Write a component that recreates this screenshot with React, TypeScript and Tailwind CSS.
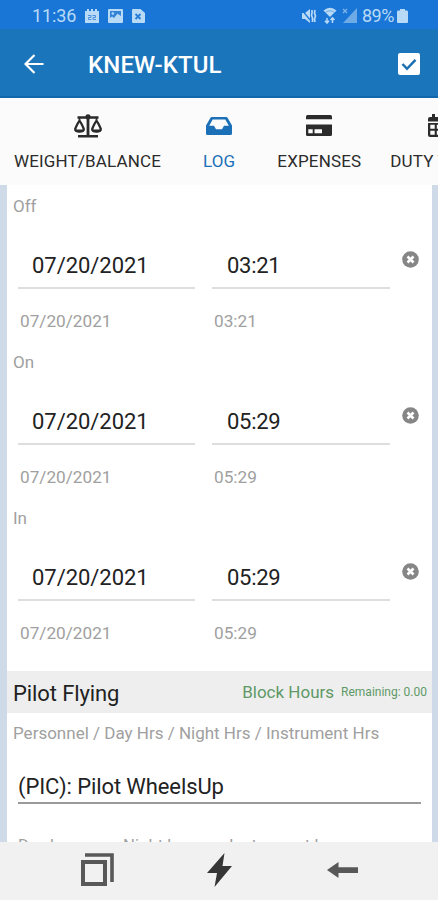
import { useState, type ReactNode } from 'react';

interface TimeEntry {
  label: string;
  date: string;
  time: string;
}

const entries: TimeEntry[] = [
  { label: 'Off', date: '07/20/2021', time: '03:21' },
  { label: 'On', date: '07/20/2021', time: '05:29' },
  { label: 'In', date: '07/20/2021', time: '05:29' },
];

function ScaleIcon() {
  return (
    <svg width="30" height="26" viewBox="0 0 30 26" fill="none" stroke="currentColor">
      <path d="M4.5 4.5H25.5M5 23.3H25" strokeWidth="2.6" />
      <path d="M15 3V22.5" strokeWidth="2.8" />
      <circle cx="15" cy="3.8" r="2.6" fill="currentColor" stroke="none" />
      <path
        d="M6.5 8C5.5 9 3.2 13.5 2.2 16Q2 18.6 6.5 18.6Q11 18.6 10.8 16C9.8 13.5 7.5 9 6.5 8ZM23.5 8C22.5 9 20.2 13.5 19.2 16Q19 18.6 23.5 18.6Q28 18.6 27.8 16C26.8 13.5 24.5 9 23.5 8Z"
        strokeWidth="2.3"
        strokeLinejoin="round"
      />
      <path d="M6.5 5V8M23.5 5V8" strokeWidth="1.8" />
      <path d="M2 16.5H11Q10 19.3 6.5 19.3Q3 19.3 2 16.5ZM19 16.5H28Q27 19.3 23.5 19.3Q20 19.3 19 16.5Z" fill="currentColor" stroke="none" />
    </svg>
  );
}

function InboxIcon() {
  return (
    <svg width="28" height="20" viewBox="0 0 28 20" fill="currentColor">
      <path fillRule="evenodd" d="M6.7 1H21.3Q22.2 1 22.7 1.9L27 9.5V17.5Q27 19 25.5 19H2.5Q1 19 1 17.5V9.5L5.3 1.9Q5.8 1 6.7 1ZM7.7 3.4L4.2 9.8H9L11 13.3H17L19 9.8H23.8L20.3 3.4Z" />
    </svg>
  );
}

function CardIcon() {
  return (
    <svg width="28" height="24" viewBox="0 0 28 24" fill="currentColor">
      <path d="M2.5 1H25.5Q27 1 27 2.5V5.2H1V2.5Q1 1 2.5 1Z" />
      <path fillRule="evenodd" d="M1 10.5H27V20.5Q27 22 25.5 22H2.5Q1 22 1 20.5ZM3.3 15.2V19.2H7.7V15.2ZM9.5 15.2V19.2H17V15.2Z" />
    </svg>
  );
}

function CalendarIcon() {
  return (
    <svg width="24" height="26" viewBox="0 0 24 26" fill="currentColor">
      <path fillRule="evenodd" d="M5 1H8V4H16V1H19V4H21Q23 4 23 6V8.5H1V6Q1 4 3 4H5ZM1 10H23V22Q23 24 21 24H3Q1 24 1 22ZM3.3 11.7V15.7H7.7V11.7ZM9.8 11.7V15.7H14.2V11.7ZM16.3 11.7V15.7H20.7V11.7ZM3.3 17.7V21.7H7.7V17.7ZM9.8 17.7V21.7H14.2V17.7ZM16.3 17.7V21.7H20.7V17.7Z" />
    </svg>
  );
}

function StatusBar() {
  return (
    <div className="flex h-[29px] shrink-0 items-center justify-between bg-[#1976d6] pt-[2px] pr-[30px] pl-8 text-[18px] text-[#b9daf7]">
      <div className="flex items-center">
        <span className="w-[44px] tracking-[-0.1px]">11:36</span>
        <svg className="ml-[9px]" width="14" height="14" viewBox="0 0 14 14" fill="currentColor">
          <path d="M0 2H2V0H4V2H6V0H8V2H10V0H12V2H14V14H0Z" />
          <path d="M3 6.5H6V8.5H3.5V10.5H6.3M7.5 6.5H10.5V8.5H8V10.5H11" fill="none" stroke="#4b91dc" />
        </svg>
        <svg className="ml-[9px]" width="15" height="14" viewBox="0 0 15 14">
          <rect width="15" height="14" rx="1" fill="currentColor" />
          <path d="M2 2H13V7L9.5 4.8L6 9L4 7.5L2 9Z" fill="#3585d7" />
          <circle cx="4.8" cy="4.5" r="1.2" fill="currentColor" />
        </svg>
        <svg className="ml-[9px]" width="13" height="14" viewBox="0 0 13 14">
          <path d="M1 0H8.5L13 4V13Q13 14 12 14H1Q0 14 0 13V1Q0 0 1 0Z" fill="currentColor" />
          <path d="M3.5 5L8.5 10M8.5 5L3.5 10" stroke="#287dd6" strokeWidth="1.8" />
        </svg>
      </div>
      <div className="flex items-center">
        <svg width="16" height="16" viewBox="0 0 16 16">
          <path d="M1 5H4L9 1V15L4 11H1Z" fill="currentColor" />
          <path d="M0 1L10 13" stroke="#1976d6" strokeWidth="1.2" />
          <path d="M11 2V5L10.5 7.5L11.5 10V14M14 2L13.5 5L14.5 8L13.5 11L14 14" fill="none" stroke="currentColor" strokeWidth="1.7" />
        </svg>
        <svg className="ml-[6px]" width="14" height="17" viewBox="0 0 14 17">
          <path d="M0.5 3.5Q7 -2 13.5 3.5L7 10Z" fill="currentColor" />
          <path d="M2.5 5.5Q7 2 11.5 5.5" fill="none" stroke="#5c9fe2" strokeWidth="0.9" />
          <path d="M4 11V16M2 13.7L4 16L6 13.7M9.5 16V11M7.5 13L9.5 10.8L11.5 13" fill="none" stroke="currentColor" strokeWidth="1.5" />
        </svg>
        <svg className="ml-[5px]" width="15" height="15" viewBox="0 0 15 15">
          <path d="M15 0V15H1Z" fill="#6eaae6" />
          <path d="M1 1L5 5M5 1L1 5" stroke="#7fb5ea" strokeWidth="1.2" />
        </svg>
        <span className="ml-[5px] w-[34px] tracking-[-0.5px]">89%</span>
        <svg className="ml-[1px]" width="11" height="14" viewBox="0 0 11 14" fill="currentColor">
          <path d="M3 0H8V1.5H10Q11 1.5 11 3V13Q11 14 10 14H1Q0 14 0 13V3Q0 1.5 1 1.5H3Z" />
        </svg>
      </div>
    </div>
  );
}

function Header() {
  return (
    <header className="flex h-[69px] shrink-0 items-center border-b-2 border-[#1067ab] bg-[#1b75bb] pt-[2px] pr-[18px] pl-6 text-white">
      <svg width="20" height="20" viewBox="0 0 20 20" fill="none" stroke="currentColor" strokeWidth="2.2">
        <path d="M19.5 10H1.5M10.5 1L1.5 10L10.5 19" />
      </svg>
      <h1 className="ml-11 flex-1 pt-[2px] text-[24px] font-medium tracking-[0.1px]">KNEW-KTUL</h1>
      <svg width="22" height="22" viewBox="0 0 22 22">
        <rect width="22" height="22" rx="2" fill="white" />
        <path d="M4.5 11L9 15.8L17.5 6.8" fill="none" stroke="#1b6fb3" strokeWidth="2.5" />
      </svg>
    </header>
  );
}

interface TabProps {
  icon: ReactNode;
  label: string;
  active: boolean;
  onClick: () => void;
}

function Tab({ icon, label, active, onClick }: TabProps) {
  return (
    <button
      onClick={onClick}
      className={`flex shrink-0 cursor-pointer flex-col items-center whitespace-nowrap ${active ? 'text-[#1b70b8]' : 'text-[#2b2b2b]'}`}
    >
      <span className="flex h-[28px] items-center">{icon}</span>
      <span className="mt-[11px] text-[17px] leading-[20px] tracking-[0.15px]">{label}</span>
    </button>
  );
}

function TimeBlock({ label, date, time }: TimeEntry) {
  return (
    <section className="h-[156px]">
      <p className="h-[42px] pt-[11px] pl-[6px] text-[17px] leading-[21px] text-[#a0a0a0]">{label}</p>
      <div className="flex pl-[11px]">
        <div className="w-[177px]">
          <div className="flex h-[62px] items-center border-b-2 border-[#dedede] pt-[16px] pl-[14px] text-[22px] tracking-[-0.05px] text-[#222222]">{date}</div>
          <p className="pt-[22px] pl-[2px] text-[17.2px] leading-[21px] text-[#a0a0a0]">{date}</p>
        </div>
        <div className="ml-[17px] w-[178px]">
          <div className="flex h-[62px] items-center border-b-2 border-[#dedede] pt-[16px] pl-[15px] text-[22px] tracking-[-0.3px] text-[#222222]">{time}</div>
          <p className="pt-[22px] pl-[2px] text-[17.2px] leading-[21px] text-[#a0a0a0]">{time}</p>
        </div>
        <button className="mt-[24px] ml-[12px] h-[17px] cursor-pointer" aria-label="Clear">
          <svg width="17" height="17" viewBox="0 0 17 17">
            <circle cx="8.5" cy="8.5" r="8.3" fill="#868686" />
            <path d="M5.5 5.5L11.5 11.5M11.5 5.5L5.5 11.5" stroke="white" strokeWidth="2.6" />
          </svg>
        </button>
      </div>
    </section>
  );
}

export default function App() {
  const [tab, setTab] = useState('LOG');

  return (
    <div className="flex h-[900px] w-[438px] flex-col overflow-hidden bg-white font-['Roboto',sans-serif]">
      <StatusBar />
      <Header />

      <nav className="flex h-[87px] shrink-0 overflow-hidden bg-[#fbfbfb] pt-[14px] pl-[14px]">
        <div className="w-[147px]">
          <Tab icon={<ScaleIcon />} label="WEIGHT/BALANCE" active={tab === 'WEIGHT'} onClick={() => setTab('WEIGHT')} />
        </div>
        <div className="ml-[42px] w-[34px]">
          <Tab icon={<InboxIcon />} label="LOG" active={tab === 'LOG'} onClick={() => setTab('LOG')} />
        </div>
        <div className="ml-[42px] w-[84px]">
          <Tab icon={<CardIcon />} label="EXPENSES" active={tab === 'EXPENSES'} onClick={() => setTab('EXPENSES')} />
        </div>
        <div className="ml-[29px] shrink-0">
          <Tab icon={<CalendarIcon />} label="DUTY TIMES" active={tab === 'DUTY'} onClick={() => setTab('DUTY')} />
        </div>
      </nav>

      <main className="min-h-0 flex-1 overflow-hidden border-x-[7px] border-r-[6px] border-[#cfdae8] bg-white">
        {entries.map((entry) => (
          <TimeBlock key={entry.label} {...entry} />
        ))}

        <div className="mt-[18px] flex h-[42px] items-center bg-[#eeeeee] pr-[5px] pl-[6px]">
          <h2 className="flex-1 pt-[2px] text-[22px] tracking-[-0.1px] text-[#222222]">Pilot Flying</h2>
          <span className="pt-[1px] text-[17px] text-[#5f9967]">Block Hours</span>
          <span className="ml-[7px] text-[12px] text-[#5f9967]">Remaining: 0.00</span>
        </div>

        <p className="pt-[10px] pl-[6px] text-[17px] leading-[21px] text-[#a0a0a0]">Personnel / Day Hrs / Night Hrs / Instrument Hrs</p>
        <div className="mt-[28px] ml-[11px] flex h-[32px] w-[403px] items-center border-b-2 border-[#9a9a9a] pb-[2px] text-[22px] tracking-[-0.1px] text-[#222222]">
          (PIC): Pilot WheelsUp
        </div>
        <div className="mt-[31px] flex pl-[11px] text-[16.8px] leading-[21px] text-[#a0a0a0]">
          <span className="w-[105px]">Day hrs</span>
          <span className="w-[106px]">Night hrs</span>
          <span className="w-[89px] overflow-hidden whitespace-nowrap">Instrument hrs</span>
        </div>
      </main>

      <footer className="flex h-[58px] shrink-0 items-start bg-[#f1f1f1] pl-[80px] text-[#585858]">
        <button className="mt-[11px] cursor-pointer" aria-label="Recent">
          <svg width="34" height="34" viewBox="0 0 34 34" fill="none" stroke="currentColor" strokeWidth="4">
            <path d="M3 9H25V31H3Z" />
            <path d="M5 2H32V29" strokeWidth="3.6" />
          </svg>
        </button>
        <button className="mt-[11px] ml-[92px] cursor-pointer" aria-label="Home">
          <svg width="27" height="35" viewBox="0 0 27 35" fill="#353535">
            <path d="M18.5 0L1 20H11L8.5 34L26 13H16.5Z" />
          </svg>
        </button>
        <button className="mt-[20px] ml-[94px] cursor-pointer" aria-label="Back">
          <svg width="32" height="16" viewBox="0 0 32 16" fill="currentColor">
            <path d="M0 8L11.5 0V5.2H31V11H11.5V16Z" />
          </svg>
        </button>
      </footer>
    </div>
  );
}
